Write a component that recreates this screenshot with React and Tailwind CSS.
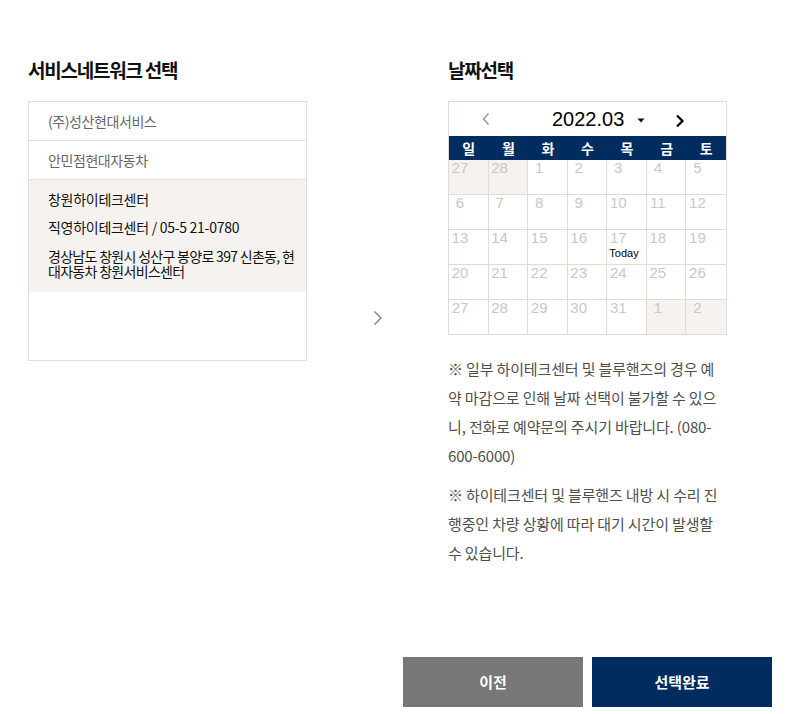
import React from "react";

const KR = { fontFamily: '"Noto Sans CJK KR", "Noto Sans", sans-serif' };
const NUM = { fontFamily: '"Liberation Sans", Arial, sans-serif' };

const rows = [
  [
    { d: 27, o: true },
    { d: 28, o: true },
    { d: 1 },
    { d: 2 },
    { d: 3 },
    { d: 4 },
    { d: 5 },
  ],
  [{ d: 6 }, { d: 7 }, { d: 8 }, { d: 9 }, { d: 10 }, { d: 11 }, { d: 12 }],
  [{ d: 13 }, { d: 14 }, { d: 15 }, { d: 16 }, { d: 17, t: true }, { d: 18 }, { d: 19 }],
  [{ d: 20 }, { d: 21 }, { d: 22 }, { d: 23 }, { d: 24 }, { d: 25 }, { d: 26 }],
  [
    { d: 27 },
    { d: 28 },
    { d: 29 },
    { d: 30 },
    { d: 31 },
    { d: 1, o: true },
    { d: 2, o: true },
  ],
];

const days = ["일", "월", "화", "수", "목", "금", "토"];

function Calendar() {
  return (
    <div className="w-[279px] border border-[#e3dbd3] bg-white">
      <div className="h-[34px] flex items-center pl-[32px]">
        <svg width="10" height="14" viewBox="0 0 10 14" className="block">
          <path d="M7.5 1.5 L2.5 7 L7.5 12.5" fill="none" stroke="#9a9a9a" strokeWidth="1.6" />
        </svg>
        <span className="ml-[61px] text-[20px] leading-[24px] text-black" style={NUM}>
          2022.03
        </span>
        <svg width="8" height="5" viewBox="0 0 8 5" className="ml-[13px] mt-[2px] block">
          <path d="M0.5 0.5 L7.5 0.5 L4 4.5 Z" fill="#111" />
        </svg>
        <svg width="10" height="14" viewBox="0 0 10 14" className="ml-[30px] mt-[4px] block">
          <path d="M2 1.5 L7.5 7 L2 12.5" fill="none" stroke="#000" strokeWidth="2.2" />
        </svg>
      </div>
      <div className="h-[24px] grid grid-cols-7 bg-[#002c5f]">
        {days.map((d) => (
          <div
            key={d}
            className="flex items-center justify-center text-[14px] font-bold text-white leading-none"
            style={KR}
          >
            {d}
          </div>
        ))}
      </div>
      {rows.map((r, ri) => (
        <div key={ri} className="grid grid-cols-7">
          {r.map((c, ci) => (
            <div
              key={ci}
              className={
                (ri === 4 ? "h-[34px] " : "h-[35px] border-b ") +
                (ci === 6 ? "" : "border-r ") +
                "flex flex-col items-start text-[14px] leading-[15px] border-[#e3dbd3] " +
                (c.o ? "bg-[#f5f2f0]" : "bg-white")
              }
            >
              <span
                className="block w-[22px] text-center text-[15px] leading-[15px] text-[#c8c8c8]"
                style={NUM}
              >
                {c.d}
              </span>
              {c.t && (
                <div className="pl-[2px] mt-[2px] text-[11px] leading-[13px] text-black" style={NUM}>
                  Today
                </div>
              )}
            </div>
          ))}
        </div>
      ))}
    </div>
  );
}

export default function App() {
  return (
    <div className="w-[794px] h-[714px] bg-white flex flex-col" style={KR}>
      <div className="h-[657px] flex pl-[28px] pt-[58px]">
        <div className="w-[279px]">
          <h2 className="text-[19px] font-bold leading-[24px] text-[#111] tracking-[-0.065em] mb-[19px]">
            서비스네트워크 선택
          </h2>
          <div className="h-[260px] border border-[#e6ded6] bg-white">
            <div className="h-[39px] border-b border-[#e6ded6] flex items-center pl-[19px] text-[14px] text-[#666] tracking-[-0.03em]">
              (주)성산현대서비스
            </div>
            <div className="h-[39px] border-b border-[#e6ded6] flex items-center pl-[19px] text-[14px] text-[#666] tracking-[-0.03em]">
              안민점현대자동차
            </div>
            <div className="bg-[#f5f2f0] pt-[9px] pb-[13px] pl-[19px] pr-[4px] text-[14px] text-[#111] tracking-[-0.02em] whitespace-nowrap">
              <p className="leading-[20px]">창원하이테크센터</p>
              <p className="leading-[20px] mt-[8px]">직영하이테크센터 / 05-5 21-0780</p>
              <p className="leading-[15px] mt-[12px] tracking-[-0.05em]">
                경상남도 창원시 성산구 봉양로 397 신촌동, 현
                <br />
                대자동차 창원서비스센터
              </p>
            </div>
          </div>
        </div>
        <div className="w-[141px] flex flex-col items-center">
          <svg width="10" height="16" viewBox="0 0 10 16" className="mt-[252px] block">
            <path d="M1.5 1.5 L8 8 L1.5 14.5" fill="none" stroke="#8a8a8a" strokeWidth="1.5" />
          </svg>
        </div>
        <div className="w-[279px]">
          <h2 className="text-[19px] font-bold leading-[24px] text-[#111] tracking-[-0.065em] mb-[19px]">
            날짜선택
          </h2>
          <Calendar />
          <div className="mt-[19px] text-[15px] leading-[29px] text-[#4f4f4f] tracking-[-0.01em] whitespace-nowrap">
            <p>
              ※ 일부 하이테크센터 및 블루핸즈의 경우 예
              <br />
              약 마감으로 인해 날짜 선택이 불가할 수 있으
              <br />
              니, 전화로 예약문의 주시기 바랍니다. (080-
              <br />
              600-6000)
            </p>
            <p className="mt-[10px]">
              ※ 하이테크센터 및 블루핸즈 내방 시 수리 진
              <br />
              행중인 차량 상황에 따라 대기 시간이 발생할
              <br />
              수 있습니다.
            </p>
          </div>
        </div>
      </div>
      <div className="flex justify-end gap-[9px] pr-[22px]">
        <button className="w-[180px] h-[50px] bg-[#777777] text-white text-[15px] font-bold">
          이전
        </button>
        <button className="w-[180px] h-[50px] bg-[#002c5f] text-white text-[15px] font-bold">
          선택완료
        </button>
      </div>
    </div>
  );
}
